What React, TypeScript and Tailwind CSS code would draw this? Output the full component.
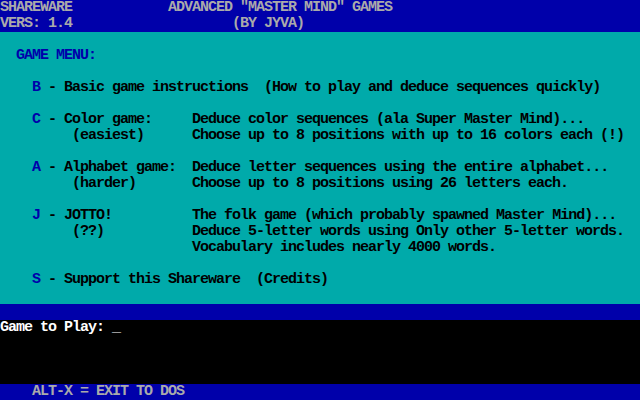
import React from 'react';

// 80x25 text-mode screen, each cell 8x16 px
const Row: React.FC<{ children?: React.ReactNode; className?: string }> = ({ children, className }) => (
    <div className={`h-[16px] whitespace-pre ${className ?? ''}`}>{children ?? ' '}</div>
);

const Key: React.FC<{ k: string }> = ({ k }) => <span className="text-[#0000aa]">{k}</span>;

interface MenuLine {
    key?: string;
    text: string;
}

const menu: (MenuLine | null)[] = [
    { key: 'B', text: ' - Basic game instructions  (How to play and deduce sequences quickly)' },
    null,
    { key: 'C', text: ' - Color game:     Deduce color sequences (ala Super Master Mind)...' },
    { text: '         (easiest)      Choose up to 8 positions with up to 16 colors each (!)' },
    null,
    { key: 'A', text: ' - Alphabet game:  Deduce letter sequences using the entire alphabet...' },
    { text: '         (harder)       Choose up to 8 positions using 26 letters each.' },
    null,
    { key: 'J', text: ' - JOTTO!          The folk game (which probably spawned Master Mind)...' },
    { text: '         (??)           Deduce 5-letter words using Only other 5-letter words.' },
    { text: '                        Vocabulary includes nearly 4000 words.' },
    null,
    { key: 'S', text: ' - Support this Shareware  (Credits)' },
];

export default function App() {
    return (
        <div
            className="w-[640px] h-[400px] overflow-hidden flex flex-col bg-black text-[15px] leading-[16px] tracking-[-1px] font-bold"
            style={{ fontFamily: '"Liberation Mono", "DejaVu Sans Mono", monospace' }}
        >
            {/* title bar */}
            <div className="bg-[#0000aa] text-[#aaaaaa]">
                <Row>{'SHAREWARE            ADVANCED "MASTER MIND" GAMES'}</Row>
                <Row>{'VERS: 1.4                    (BY JYVA)'}</Row>
            </div>

            {/* menu */}
            <div className="bg-[#00aaaa] text-black h-[272px]">
                <Row />
                <Row className="text-[#0000aa]">{'  GAME MENU:'}</Row>
                <Row />
                {menu.map((line, i) =>
                    line === null ? (
                        <Row key={i} />
                    ) : line.key ? (
                        <Row key={i}>
                            {'    '}
                            <Key k={line.key} />
                            {line.text}
                        </Row>
                    ) : (
                        <Row key={i}>{line.text}</Row>
                    )
                )}
            </div>

            <div className="bg-[#0000aa] h-[16px]" />

            {/* prompt */}
            <div className="bg-black text-white h-[64px]">
                <Row>{'Game to Play: _'}</Row>
            </div>

            <div className="bg-[#0000aa] text-[#aaaaaa]">
                <Row>{'    ALT-X = EXIT TO DOS'}</Row>
            </div>
        </div>
    );
}
